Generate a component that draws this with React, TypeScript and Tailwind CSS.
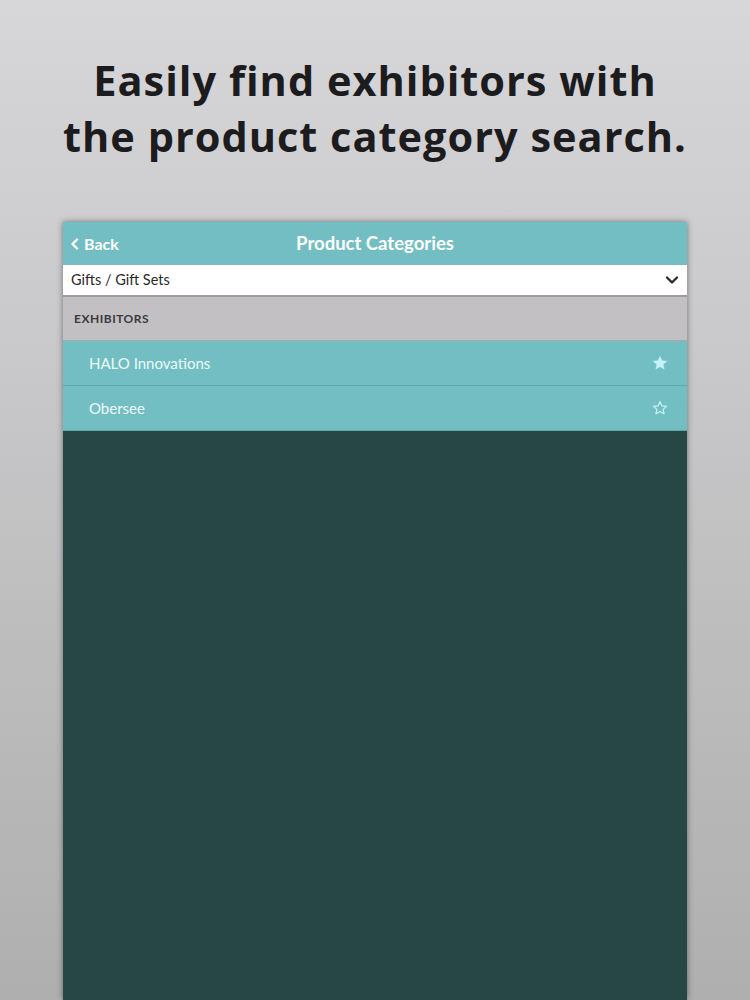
import React from 'react';

const Star = ({ filled }: { filled: boolean }) => (
  <svg width="16" height="16" viewBox="0 0 24 24" className="text-[#c4f4f8]">
    <path
      d="M12 2.5l2.9 6.3 6.9.7-5.2 4.6 1.5 6.8L12 17.4l-6.1 3.5 1.5-6.8L2.2 9.5l6.9-.7z"
      fill={filled ? 'currentColor' : 'none'}
      stroke="currentColor"
      strokeWidth={filled ? 1 : 1.8}
      strokeLinejoin="round"
    />
  </svg>
);

const App = () => {
  const exhibitors = [
    { name: 'HALO Innovations', fav: true },
    { name: 'Obersee', fav: false }
  ];

  return (
    <div
      className="w-[750px] h-[1000px] overflow-hidden bg-gradient-to-b from-[#d7d6d9] to-[#afafaf] flex flex-col items-center"
      style={{ fontFamily: 'Lato, "Open Sans", sans-serif' }}
    >
      <h1
        className="mt-[52px] text-center text-[41.5px] leading-[56px] font-bold text-[#1c1c1e] tracking-[1px] whitespace-nowrap"
        style={{ fontFamily: '"Open Sans", sans-serif' }}
      >
        Easily find exhibitors with
        <br />
        the product category search.
      </h1>

      <div className="mt-[58px] w-[624px] flex-1 flex flex-col bg-[#274646] shadow-[0_0_6px_rgba(0,0,0,0.45)]">
        <div className="h-[43px] bg-[#72bec3] flex items-center relative">
          <div className="flex items-center gap-[4px] pl-[7px] text-white font-bold text-[16px]">
            <svg width="10" height="12" viewBox="0 0 10 12">
              <path d="M7 1.5L2.5 6 7 10.5" fill="none" stroke="white" strokeWidth="2.4" strokeLinecap="round" strokeLinejoin="round" />
            </svg>
            Back
          </div>
          <div className="absolute inset-0 flex items-center justify-center text-white font-bold text-[18.5px] pointer-events-none">
            Product Categories
          </div>
        </div>

        <div className="h-[32px] bg-white flex items-center justify-between pl-[8px] pr-[8px] border-b-2 border-[#9e9c9f]">
          <span className="text-[14.5px] text-[#2a2a2a]">Gifts / Gift Sets</span>
          <svg width="14" height="10" viewBox="0 0 14 10">
            <path d="M2 2.5l5 5 5-5" fill="none" stroke="#2a2a2a" strokeWidth="2.4" strokeLinecap="round" strokeLinejoin="round" />
          </svg>
        </div>

        <div className="h-[44px] bg-[#c3c0c4] flex items-center pl-[11px] border-b border-[#aaa8ab]">
          <span className="text-[12px] font-bold text-[#3a3a3a] tracking-[0.5px]">EXHIBITORS</span>
        </div>

        {exhibitors.map((e) => (
          <div
            key={e.name}
            className="h-[45px] bg-[#72bec3] flex items-center justify-between pl-[26px] pr-[19px] border-b border-[#5ea8ad]"
          >
            <span className="text-[15px] text-[#eefafb]">{e.name}</span>
            <Star filled={e.fav} />
          </div>
        ))}
      </div>
    </div>
  );
};

export default App;
